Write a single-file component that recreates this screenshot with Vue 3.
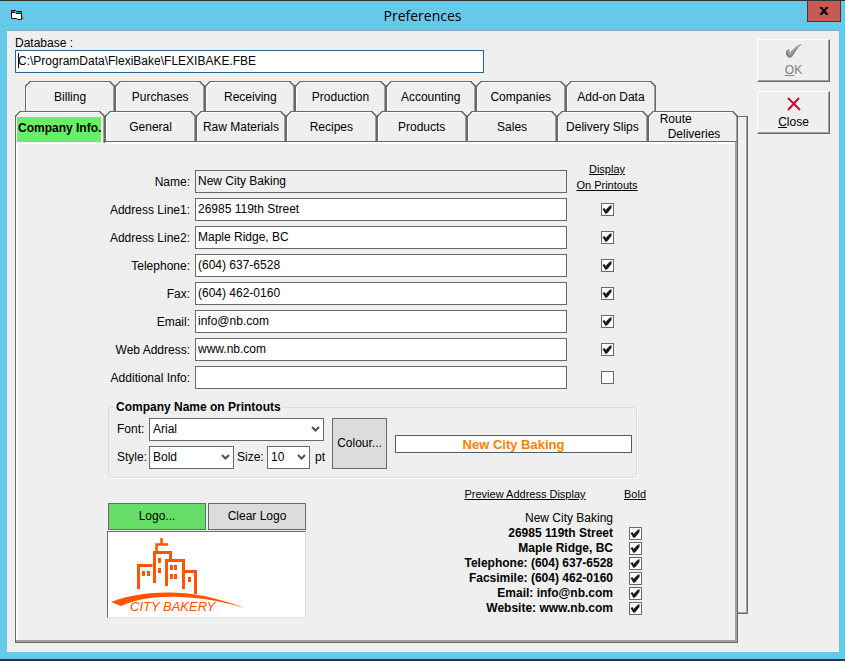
<script setup>
import { ref, reactive } from 'vue'

const database = ref('C:\\ProgramData\\FlexiBake\\FLEXIBAKE.FBE')

const backTabs = ['Billing', 'Purchases', 'Receiving', 'Production', 'Accounting', 'Companies', 'Add-on Data']
const frontTabs = ['General', 'Raw Materials', 'Recipes', 'Products', 'Sales', 'Delivery Slips']

const fields = reactive([
  { id: 'name', label: 'Name:', value: 'New City Baking', locked: true },
  { id: 'address1', label: 'Address Line1:', value: '26985 119th Street', shown: true },
  { id: 'address2', label: 'Address Line2:', value: 'Maple Ridge, BC', shown: true },
  { id: 'telephone', label: 'Telephone:', value: '(604) 637-6528', shown: true },
  { id: 'fax', label: 'Fax:', value: '(604) 462-0160', shown: true },
  { id: 'email', label: 'Email:', value: 'info@nb.com', shown: true },
  { id: 'web', label: 'Web Address:', value: 'www.nb.com', shown: true },
  { id: 'additional', label: 'Additional Info:', value: '', shown: false }
])

const font = ref('Arial')
const fontStyle = ref('Bold')
const size = ref('10')

const preview = reactive([
  { text: '26985 119th Street', bold: true },
  { text: 'Maple Ridge, BC', bold: true },
  { text: 'Telephone: (604) 637-6528', bold: true },
  { text: 'Facsimile: (604) 462-0160', bold: true },
  { text: 'Email: info@nb.com', bold: true },
  { text: 'Website: www.nb.com', bold: true }
])
</script>

<template>
  <div class="window">
    <header class="titlebar">
      <svg class="app-icon" width="13" height="12" viewBox="0 0 13 12" aria-hidden="true">
        <path d="M11 8h2v2h-2z" fill="#808080" />
        <path d="M.5 1.500h4l1 1h5v8h-4l-1-1h-5z" fill="#fff" stroke="#000" />
        <path d="M1 2h3l1 1h5v1H5L4 3H1z" fill="#00b4b4" />
        <path d="M1 3.500h3l1 1h5" fill="none" stroke="#000" />
      </svg>
      <h1>Preferences</h1>
      <button class="window-close" type="button" aria-label="Close window">
        <svg width="10" height="8" viewBox="0 0 10 8"><path d="M1.500 0l7 8M8.500 0l-7 8" stroke="#000" stroke-width="2.200" /></svg>
      </button>
    </header>

    <div class="client">
      <main>
        <div class="database">
          <label for="database">Database :</label>
          <div class="database-box">
            <input id="database" v-model="database" type="text" />
            <span class="caret"></span>
          </div>
        </div>

        <div class="sheets">
          <div class="front">
            <nav class="tabs back-row">
              <button v-for="tab in backTabs" :key="tab" class="tab" type="button">{{ tab }}</button>
            </nav>
            <nav class="tabs">
              <button class="tab active" type="button"><span>Company Info.</span></button>
              <button v-for="tab in frontTabs" :key="tab" class="tab" type="button">{{ tab }}</button>
              <button class="tab route" type="button">Route <span>Deliveries</span></button>
            </nav>

            <section class="panel">
              <div class="form">
                <template v-for="field in fields" :key="field.id">
                  <label :for="field.id">{{ field.label }}</label>
                  <input :id="field.id" v-model="field.value" type="text" :readonly="field.locked" :class="{ locked: field.locked }" />
                  <div v-if="field.locked" class="column-title">Display<br />On Printouts</div>
                  <input v-else v-model="field.shown" class="check" type="checkbox" :aria-label="'Display ' + field.label" />
                </template>
              </div>

              <fieldset class="printout">
                <legend>Company Name on Printouts</legend>
                <div class="printout-body">
                  <div class="font-grid">
                    <label for="font">Font:</label>
                    <div class="select wide">
                      <select id="font" v-model="font"><option>Arial</option></select>
                      <svg width="9" height="7" viewBox="0 0 9 7"><path d="M1 1l3.500 3.500L8 1" /></svg>
                    </div>
                    <label for="style">Style:</label>
                    <div class="select">
                      <select id="style" v-model="fontStyle"><option>Bold</option></select>
                      <svg width="9" height="7" viewBox="0 0 9 7"><path d="M1 1l3.500 3.500L8 1" /></svg>
                    </div>
                    <label class="size-label" for="size">Size:</label>
                    <div class="select">
                      <select id="size" v-model="size"><option>10</option></select>
                      <svg width="9" height="7" viewBox="0 0 9 7"><path d="M1 1l3.500 3.500L8 1" /></svg>
                    </div>
                    <span class="unit">pt</span>
                  </div>
                  <button class="flat colour" type="button">Colour...</button>
                  <output class="sample">New City Baking</output>
                </div>
              </fieldset>

              <div class="lower">
                <div class="logo">
                  <div class="logo-buttons">
                    <button class="flat green" type="button">Logo...</button>
                    <button class="flat" type="button">Clear Logo</button>
                  </div>
                  <div class="logo-frame">
                    <svg width="140" height="84" viewBox="0 0 140 84" role="img" aria-label="City Bakery">
                      <g fill="none" stroke="#ff5500" stroke-width="3">
                        <path d="M30.500 57V33.500H44.500" />
                        <path d="M46.500 51V20.500H62.500V28" />
                        <path d="M48.500 20V12.500H60M53.500 13V6" stroke-width="2.500" />
                        <path d="M58.500 54V28.500H75.500V57" />
                        <path d="M76 39.500H87.500V62" />
                      </g>
                      <path d="M34 39h3v5h-3zM39 39h3v5h-3zM50 26h3v5h-3zM50 36h3v5h-3zM62 33h3v5h-3zM66 33h3v5h-3zM62 42h3v5h-3zM66 42h3v5h-3zM80 45h3v5h-3z" fill="#ff5500" />
                      <path d="M3 70C30 60 56 59 84 62C104 65 121 70 137 76C113 69 94 66 73 65C48 64 29 67 13 74Z" fill="#ff5500" />
                      <text x="22" y="79">CITY BAKERY</text>
                    </svg>
                  </div>
                </div>

                <div class="preview">
                  <span class="heading">Preview Address Display</span>
                  <span class="heading bold-heading">Bold</span>
                  <span class="line">New City Baking</span>
                  <template v-for="(line, i) in preview" :key="i">
                    <label :for="'bold' + i" class="line" :class="{ bold: line.bold }">{{ line.text }}</label>
                    <input :id="'bold' + i" v-model="line.bold" class="check" type="checkbox" />
                  </template>
                </div>
              </div>
            </section>
          </div>
          <div class="back-sheet"></div>
        </div>
      </main>

      <aside>
        <button class="command" type="button" disabled>
          <svg width="18" height="16" viewBox="0 0 18 16">
            <path d="M1 8l3-2 1 4C8 6 12 2 17 1C13 4 10 9 7 14L4 15L1 12z" fill="#858585" />
            <path d="M3 8l2 4C8 8 10 5 14 3" fill="none" stroke="#bababa" />
          </svg>
          <span><u>O</u>K</span>
        </button>
        <button class="command" type="button">
          <svg width="18" height="16" viewBox="0 0 18 16">
            <path d="M3 3l12 12M14 3L3 15" fill="none" stroke="#c8102e" stroke-width="2" />
          </svg>
          <span><u>C</u>lose</span>
        </button>
      </aside>
    </div>
  </div>
</template>

<style>
body {
  margin: 0;
}
</style>

<style scoped>
.window,
.window * {
  box-sizing: border-box;
}
.window {
  display: flex;
  flex-direction: column;
  min-height: 100vh;
  border-top: 1px solid #2e3438;
  border-bottom: 2px solid #2e3438;
  background: #66c9ea;
  color: #000;
  font: 12px/15px "Liberation Sans", Arial, sans-serif;
}
button,
input,
select {
  margin: 0;
  border-radius: 0;
  color: inherit;
  font: inherit;
}
button {
  padding: 0;
}
.titlebar {
  display: grid;
  grid-template-columns: 34px 1fr 34px;
  height: 29px;
  padding: 0 4px 0 0;
}
.app-icon {
  margin: 8px 0 0 11px;
}
h1 {
  margin: 0;
  padding-left: 4px;
  font: 14px/29px "Open Sans", "Noto Sans", sans-serif;
  text-align: center;
}
.window-close {
  display: grid;
  place-items: center;
  height: 21px;
  border: 1px solid #54302f;
  border-top: 0;
  background: #c45a52;
}
.client {
  display: flex;
  flex: 1;
  gap: 9px;
  margin: 0 6px 7px 7px;
  padding: 5px 9px 9px 8px;
  border-top: 1px solid #8aa9b8;
  background: #efefef;
}
main {
  display: flex;
  flex: 1;
  flex-direction: column;
  min-width: 0;
}
.database label {
  display: block;
  height: 14px;
}
.database-box {
  position: relative;
  width: 64%;
}
.database input {
  display: block;
  width: 100%;
  height: 23px;
  padding: 0 2px 2px;
  border: 1px solid #2a6390;
  background: #fff;
}
.caret {
  position: absolute;
  top: 3px;
  left: 3px;
  width: 1px;
  height: 15px;
  background: #000;
}
.sheets {
  display: flex;
  flex: 1;
  margin-top: 8px;
}
.front {
  display: flex;
  flex: 1;
  flex-direction: column;
  min-width: 0;
}
.back-sheet {
  width: 10px;
  margin: 35px 0 29px;
  border: solid #696969;
  border-width: 1px 1px 1px 0;
  box-shadow: inset -1px -1px #a0a0a0, inset 0 1px #fff;
}
.tabs {
  display: grid;
  grid-auto-columns: minmax(0, 1fr);
  grid-auto-flow: column;
}
.back-row {
  padding: 0 82px 0 10px;
}
.tab {
  height: 30px;
  padding: 1px 0 0;
  border: 1px solid #696969;
  border-bottom: 0;
  border-radius: 5px 5px 0 0;
  corner-shape: bevel;
  background: #efefef;
  box-shadow: inset -1px 0 #a0a0a0, inset 1px 1px #fff;
  white-space: nowrap;
}
.tab.active {
  position: relative;
  height: 32px;
  margin-bottom: -2px;
  padding: 5px 3px 1px 1px;
  font-weight: bold;
}
.tab.active span {
  display: block;
  height: 25px;
  background: #66f066;
  line-height: 23px;
  text-align: right;
}
.tab.route {
  padding: 0 0 0 11px;
  text-align: left;
}
.tab.route span {
  display: block;
  padding-left: 8px;
}
.panel {
  flex: 1;
  padding: 28px 90px 24px 91px;
  border: 1px solid #696969;
  box-shadow: inset -2px -2px #a0a0a0, inset 2px 2px #fff;
}
.form {
  display: grid;
  grid-template-columns: 83px 1fr 80px;
  grid-auto-rows: 23px;
  row-gap: 5px;
  align-items: center;
}
.form label {
  justify-self: end;
  padding-top: 2px;
  white-space: nowrap;
}
.form input[type='text'] {
  width: auto;
  min-width: 0;
  height: 23px;
  margin-left: 5px;
  padding: 0 2px 2px;
  border: 1px solid #696969;
  background: #fff;
}
.form input.locked {
  background: #efefef;
}
.column-title {
  align-self: end;
  font-size: 11px;
  line-height: 16px;
  text-align: center;
  text-decoration: underline;
}
.check {
  display: block;
  justify-self: center;
  width: 13px;
  height: 13px;
  border: 1px solid #696969;
  background: #fff;
  appearance: none;
}
.check:checked::after {
  display: block;
  width: 11px;
  height: 11px;
  background: #1c1c1c;
  clip-path: polygon(1px 5px, 3px 4px, 4px 6px, 8px 2px, 10px 1px, 10px 4px, 6px 9px, 4px 10px);
  content: '';
}
.printout {
  min-width: 0;
  margin: 11px 10px 0 1px;
  padding: 3px 4px 8px 8px;
  border: 1px solid #d5dfe5;
  border-radius: 3px;
  box-shadow: 1px 1px #fff;
}
legend {
  margin-left: -3px;
  padding: 0 2px;
  font-weight: bold;
}
.printout-body {
  display: flex;
  align-items: center;
  gap: 8px;
}
.font-grid {
  display: grid;
  grid-template-columns: 32px 85px 33px 43px 14px;
  row-gap: 5px;
  align-items: center;
}
.select {
  display: grid;
  align-items: center;
}
.select.wide {
  grid-column: 2 / 5;
  width: 175px;
}
.font-grid .select.wide + label {
  grid-column: 1;
}
.select select {
  grid-area: 1 / 1;
  width: 100%;
  height: 23px;
  padding: 0 3px;
  border: 1px solid #696969;
  background: #fff;
  appearance: none;
}
.select svg {
  grid-area: 1 / 1;
  justify-self: end;
  margin-right: 4px;
  fill: none;
  stroke: #505050;
  stroke-width: 2;
  pointer-events: none;
}
.size-label {
  padding-left: 3px;
}
.unit {
  padding-left: 5px;
}
.flat {
  height: 27px;
  border: 1px solid #696969;
  background: #dcdcdc;
}
.flat.green {
  background: #66dd66;
}
.flat.colour {
  width: 55px;
  height: 51px;
}
.sample {
  flex: 1;
  height: 18px;
  border: 1px solid #5a5a5a;
  background: #fff;
  color: #ff8000;
  font-size: 13px;
  font-weight: bold;
  line-height: 17px;
  text-align: center;
}
.lower {
  display: flex;
  align-items: flex-start;
  justify-content: space-between;
  margin: 9px -10px 0 0;
}
.logo {
  width: 199px;
  margin-top: 16px;
}
.logo-buttons {
  display: grid;
  grid-template-columns: 1fr 1fr;
  gap: 2px;
  padding-left: 1px;
}
.logo-frame {
  height: 87px;
  margin-top: 1px;
  border: 1px solid;
  border-color: #696969 #e3e3e3 #e3e3e3 #696969;
  background: #fff;
}
.logo-frame text {
  fill: #ff5500;
  font: italic 13px "Liberation Sans", Arial, sans-serif;
}
.preview {
  display: grid;
  grid-template-columns: auto 44px;
  white-space: nowrap;
}
.heading {
  height: 24px;
  font-size: 11px;
  text-decoration: underline;
}
.bold-heading {
  text-align: center;
}
.line {
  grid-column: 1;
  justify-self: end;
}
.line.bold {
  font-weight: bold;
}
.preview .check {
  align-self: center;
}
aside {
  display: flex;
  flex-direction: column;
  gap: 9px;
  width: 73px;
  padding-top: 3px;
}
.command {
  display: flex;
  flex-direction: column;
  align-items: center;
  gap: 4px;
  height: 43px;
  padding-top: 3px;
  border: 1px solid;
  border-color: #fff #696969 #696969 #fff;
  background: #efefef;
  box-shadow: inset -1px -1px #a0a0a0;
}
.command:disabled {
  color: #808080;
}
</style>
